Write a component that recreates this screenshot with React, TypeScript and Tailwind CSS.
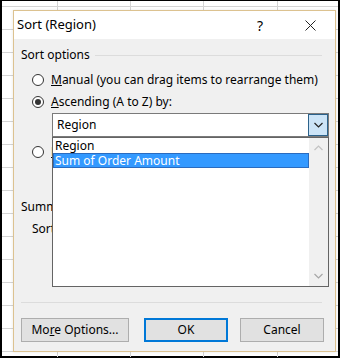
import React from "react";

const font = { fontFamily: '"Noto Sans", "Open Sans", sans-serif' };

const Radio = ({ checked, label, clip }: { checked?: boolean; label: React.ReactNode; clip?: boolean }) => (
  <div className="flex h-[16px] items-center">
    <span className="ml-[11px] flex h-[12px] w-[12px] shrink-0 items-center justify-center rounded-full border border-[#333333] bg-white">
      {checked && <span className="h-[6px] w-[6px] rounded-full bg-[#333333]" />}
    </span>
    <span className={clip ? "ml-[7px] w-[2px] overflow-hidden whitespace-nowrap" : "ml-[7px] whitespace-nowrap"}>{label}</span>
  </div>
);

const Chevron = ({ up, color }: { up?: boolean; color: string }) => (
  <svg width="9" height="6" viewBox="0 0 9 6">
    <path d={up ? "M0.5 5 L4.5 1 L8.5 5" : "M0.5 1 L4.5 5 L8.5 1"} fill="none" stroke={color} strokeWidth="1.2" />
  </svg>
);

// backdrop: the sheet behind the dialog
const SheetGrid = () => (
  <svg className="absolute inset-0" width="336" height="356">
    {[55, 128, 201, 275].map((x) => (
      <line key={x} x1={x + 0.5} y1="0" x2={x + 0.5} y2="356" stroke="#d4d4d4" />
    ))}
    {Array.from({ length: 16 }).map((_, i) => (
      <line key={i} x1="0" y1={i * 23 + 5.5} x2="336" y2={i * 23 + 5.5} stroke="#d4d4d4" />
    ))}
  </svg>
);

export default function App() {
  return (
    <div className="h-[361px] w-[346px] bg-white text-[12px] text-black" style={font}>
      <div className="relative h-[358px] w-[340px] border-2 border-t border-black bg-white">
        <SheetGrid />
        <div className="absolute left-[11px] top-[9px] flex h-[342px] w-[323px] flex-col border border-[#dcc290] bg-[#f0f0f0] shadow-[0_0_3px_rgba(0,0,0,0.1)]">
          {/* title bar */}
          <div className="flex h-[28px] items-center bg-white pl-[3px]">
            <span className="text-[13px]">Sort (Region)</span>
            <span className="ml-auto mr-[42px] text-[14px]">?</span>
            <svg className="mr-[19px]" width="11" height="11" viewBox="0 0 11 11">
              <path d="M0.5 0.5 L10.5 10.5 M10.5 0.5 L0.5 10.5" stroke="#222" strokeWidth="1" />
            </svg>
          </div>

          {/* body */}
          <div className="flex flex-1 flex-col px-[7px] pt-[8px]">
            <div className="flex h-[16px] items-center">
              <span>Sort options</span>
              <span className="ml-[5px] mr-[6px] h-px flex-1 bg-[#dcdcdc]" />
            </div>

            <div className="mt-[9px]">
              <Radio label={<><u>M</u>anual (you can drag items to rearrange them)</>} />
            </div>
            <div className="mt-[6px]">
              <Radio checked label={<><u>A</u>scending (A to Z) by:</>} />
            </div>

            {/* combo with open list */}
            <div className="relative ml-[31px] mt-[3px] w-[277px]">
              <div className="flex h-[24px] items-center border border-[#7a7a7a] bg-white">
                <span className="pl-[4px]">Region</span>
                <span className="ml-auto flex h-[22px] w-[20px] items-center justify-center border border-[#2c628b] bg-[#cce4f7]">
                  <Chevron color="#222" />
                </span>
              </div>
              <div className="absolute left-0 top-full z-10 flex h-[150px] w-[277px] border border-[#646464] bg-white">
                <div className="flex flex-1 flex-col leading-[13px]">
                  <div className="flex h-[15px] items-center pl-[2px]">Region</div>
                  <div className="flex h-[15px] items-center border border-[#2a6bbf] bg-[#3399ff] pl-[1px] text-white">
                    Sum of Order Amount
                  </div>
                </div>
                <div className="flex w-[19px] flex-col items-center justify-between bg-[#f0f0f0] py-[7px]">
                  <Chevron up color="#c2c2c2" />
                  <Chevron color="#a6a6a6" />
                </div>
              </div>
            </div>

            <div className="mt-[7px]">
              <Radio clip label={<><u>D</u>escending (Z to A) by:</>} />
            </div>

            {/* summary group, mostly hidden behind the open list */}
            <div className="mt-[39px] flex h-[16px] w-[31px] items-center overflow-hidden whitespace-nowrap">Summary</div>
            <div className="mt-[6px] flex h-[16px] w-[31px] items-center overflow-hidden whitespace-nowrap pl-[11px]">Sort Region by</div>

            <div className="mr-[6px] mt-[65px] h-px bg-[#dcdcdc]" />

            {/* buttons */}
            <div className="mt-[15px] flex items-center">
              <button className="h-[24px] w-[108px] border border-[#adadad] bg-[#e1e1e1]">
                Mo<u>r</u>e Options...
              </button>
              <button className="ml-[15px] h-[24px] w-[84px] border-2 border-[#0078d7] bg-[#e1e1e1]">OK</button>
              <button className="ml-[12px] h-[24px] w-[84px] border border-[#adadad] bg-[#e1e1e1]">Cancel</button>
            </div>
          </div>
        </div>
      </div>
    </div>
  );
}
